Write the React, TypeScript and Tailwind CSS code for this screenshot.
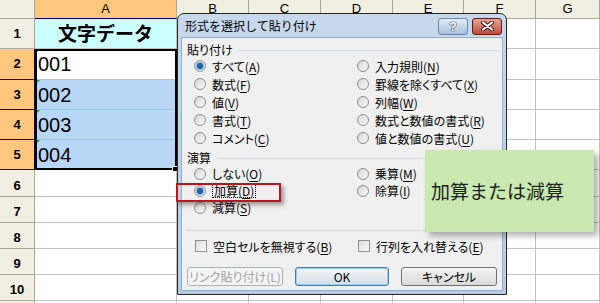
import React from "react";

const LETTERS = ["A", "B", "C", "D", "E", "F", "G"];
const DATA: Record<number, string> = { 2: "001", 3: "002", 4: "003", 5: "004" };

const Mn = ({ t, k }: { t: string; k: string }) => (
  <span className="whitespace-nowrap">
    {t}(<span className="underline underline-offset-[2px]">{k}</span>)
  </span>
);

const Radio = ({ checked = false }: { checked?: boolean }) => (
  <span className="w-[12px] h-[12px] shrink-0 rounded-full border border-[#8e8f8f] bg-linear-to-br from-[#d6d6d6] to-[#fbfbfb] flex items-center justify-center">
    {checked && (
      <span className="w-[6px] h-[6px] rounded-full bg-[#1c63a8] ring-1 ring-[#7fb4e0]" />
    )}
  </span>
);

const Check = () => (
  <span className="w-[12px] h-[12px] shrink-0 border border-[#8e8f8f] bg-linear-to-br from-[#dcdcdc] to-[#fbfbfb]" />
);

const Option = ({ t, k, checked, focus }: { t: string; k: string; checked?: boolean; focus?: boolean }) => (
  <div className="flex items-center gap-[6px]">
    <Radio checked={checked} />
    <span className={focus ? "border border-dotted border-black px-[1px] leading-[13px]" : "leading-[13px]"}>
      <Mn t={t} k={k} />
    </span>
  </div>
);

const SectionLabel = ({ text }: { text: string }) => (
  <div className="h-[14px] flex items-center gap-[6px] pl-[5px] pr-[3px]">
    <span className="leading-none">{text}</span>
    <span className="flex-1 h-px bg-[#d3dde6]" />
  </div>
);

function Sheet() {
  const rowHeaders = Array.from({ length: 10 }, (_, i) => i + 1);
  return (
    <div className="grid grid-cols-[35px_142px_72px_72px_72px_71px_72px_64px] grid-rows-[19px_30px_31px_30px_30px_30px_27px_26px_26px_26px_26px_2px] font-['Liberation_Sans',sans-serif]">
      <div className="bg-[#f1efe2] border-r border-b border-[#aca899]" />
      {LETTERS.map((l) => (
        <div
          key={l}
          className={
            l === "A"
              ? "bg-[#ffc67d] border-r border-b border-r-[#aca899] border-b-[#000080] flex items-center justify-center text-[13px]"
              : "bg-[#f1efe2] border-r border-b border-[#aca899] flex items-center justify-center text-[13px]"
          }
        >
          {l}
        </div>
      ))}
      {rowHeaders.map((r) => (
        <React.Fragment key={r}>
          <div
            className={
              r >= 2 && r <= 5
                ? "bg-[#ffc67d] border-r border-b border-[#000080] flex items-center justify-center text-[13px] font-semibold"
                : r === 1
                ? "bg-[#f1efe2] border-r border-b border-[#aca899] flex items-center justify-center text-[13px] font-semibold"
                : "bg-[#f1efe2] border-r border-b border-[#aca899] flex items-end justify-center pb-[1px] text-[13px] font-semibold"
            }
          >
            {r}
          </div>
          {LETTERS.map((l) => {
            if (l === "A" && r === 1)
              return (
                <div key={l} className="bg-[#ccffff] border-r border-b border-[#c0c0c0] flex items-center justify-center font-['Noto_Sans_CJK_JP',sans-serif] font-bold text-[19px]">
                  文字データ
                </div>
              );
            if (l === "A" && DATA[r])
              return (
                <div
                  key={l}
                  className={
                    r === 2
                      ? "relative bg-white border-r border-b border-[#c0c0c0] flex items-center pl-[3px] text-[20px]"
                      : "relative bg-[#b8d6f6] border-r border-b border-[#c0c0c0] flex items-center pl-[3px] text-[20px]"
                  }
                >
                  <span className="absolute top-0 left-0 w-0 h-0 border-t-[5px] border-t-[#1a9a1a] border-r-[5px] border-r-transparent" />
                  {DATA[r]}
                </div>
              );
            return <div key={l} className="bg-white border-r border-b border-[#c0c0c0]" />;
          })}
        </React.Fragment>
      ))}
      {Array.from({ length: 8 }, (_, i) => (
        <div key={i} className={i === 0 ? "bg-[#f1efe2] border-r border-[#aca899]" : "bg-white border-r border-[#c0c0c0]"} />
      ))}
    </div>
  );
}

function Dialog() {
  return (
    <div className="absolute left-[177px] top-[13px] w-[330px] h-[282px] flex flex-col rounded-t-[7px] border border-[#262626] bg-linear-to-b from-[#c8d9ed] to-[#b6cbe3] px-[3px] pb-[3px] font-['Noto_Sans_CJK_JP',sans-serif] text-[12px] text-black">
      <div className="h-[23px] flex items-center justify-between pl-[4px] pr-[1px]">
        <span className="leading-none text-[12px]">形式を選択して貼り付け</span>
        <div className="flex items-center gap-[4px] mt-[1px]">
          <div className="w-[30px] h-[17px] rounded-[3px] border border-[#6a86a8] bg-linear-to-b from-[#e3ecf6] to-[#a9c0db] flex items-center justify-center">
            <span className="font-['Liberation_Sans',sans-serif] font-bold text-[13px] leading-none text-white [text-shadow:0_0_1px_#26374f,0_0_1px_#26374f,0_0_1px_#26374f]">?</span>
          </div>
          <div className="w-[30px] h-[17px] rounded-[3px] border border-[#5b1c16] bg-linear-to-b from-[#e3a394] to-[#c24a3d] flex items-center justify-center">
            <svg width="13" height="10" viewBox="0 0 13 10">
              <path d="M2 1.5 L11 8.5 M11 1.5 L2 8.5" stroke="#3a1410" strokeWidth="4" strokeLinecap="round" />
              <path d="M2 1.5 L11 8.5 M11 1.5 L2 8.5" stroke="#ffffff" strokeWidth="2.2" strokeLinecap="round" />
            </svg>
          </div>
        </div>
      </div>
      <div className="flex-1 flex flex-col bg-[#f0f0f0] border border-[#97aec9] pt-[5px] [font-feature-settings:'palt']">
        <SectionLabel text="貼り付け" />
        <div className="grid grid-cols-[163px_1fr] auto-rows-[18px] items-center pl-[12px]">
          <Option t="すべて" k="A" checked />
          <Option t="入力規則" k="N" />
          <Option t="数式" k="F" />
          <Option t="罫線を除くすべて" k="X" />
          <Option t="値" k="V" />
          <Option t="列幅" k="W" />
          <Option t="書式" k="T" />
          <Option t="数式と数値の書式" k="R" />
          <Option t="コメント" k="C" />
          <Option t="値と数値の書式" k="U" />
        </div>
        <div className="mt-[4px]">
          <SectionLabel text="演算" />
        </div>
        <div className="grid grid-cols-[163px_1fr] auto-rows-[17px] items-center pl-[12px]">
          <Option t="しない" k="O" />
          <Option t="乗算" k="M" />
          <Option t="加算" k="D" checked focus />
          <Option t="除算" k="I" />
          <Option t="減算" k="S" />
          <span />
        </div>
        <div className="mt-[14px] mx-[5px] h-px bg-[#d3dde6]" />
        <div className="mt-[6px] grid grid-cols-[163px_1fr] h-[18px] items-center pl-[13px]">
          <div className="flex items-center gap-[6px]">
            <Check />
            <span className="leading-[13px]"><Mn t="空白セルを無視する" k="B" /></span>
          </div>
          <div className="flex items-center gap-[6px]">
            <Check />
            <span className="leading-[13px]"><Mn t="行列を入れ替える" k="E" /></span>
          </div>
        </div>
        <div className="mt-[12px] flex gap-[12px] pl-[5px]">
          <div className="w-[96px] h-[19px] rounded-[3px] border border-[#adb2b5] bg-[#f4f4f4] text-[#a3a3a3] flex items-center justify-center leading-none whitespace-nowrap">
            リンク貼り付け(L)
          </div>
          <div className="w-[94px] h-[19px] rounded-[3px] border border-[#3c7fb1] bg-linear-to-b from-[#f3f6f9] to-[#d5dee6] flex items-center justify-center leading-none shadow-[inset_0_0_0_1px_#9ad0f1]">
            OK
          </div>
          <div className="w-[96px] h-[19px] rounded-[3px] border border-[#707070] bg-linear-to-b from-[#f4f4f4] to-[#d9d9d9] flex items-center justify-center leading-none">
            キャンセル
          </div>
        </div>
      </div>
    </div>
  );
}

export default function App() {
  return (
    <div className="relative w-[600px] h-[303px] overflow-hidden bg-white">
      <Sheet />
      <div className="absolute left-[35px] top-[49px] w-[142px] h-[121px] border-2 border-black pointer-events-none" />
      <div className="absolute left-[172px] top-[166px] w-[6px] h-[6px] bg-black border border-white" />
      <Dialog />
      <div className="absolute left-[176px] top-[183px] w-[105px] h-[19px] border-2 border-[#c0141c] shadow-[3px_3px_4px_rgba(0,0,0,0.35)]" />
      <div className="absolute left-[425px] top-[150px] w-[169px] h-[82px] bg-[#c9e9b1] shadow-[4px_4px_6px_rgba(0,0,0,0.3)] flex items-center pl-[6px] pt-[1px] font-['Noto_Sans_CJK_JP',sans-serif] text-[19px] text-[#1e1e1e]">
        加算または減算
      </div>
    </div>
  );
}
